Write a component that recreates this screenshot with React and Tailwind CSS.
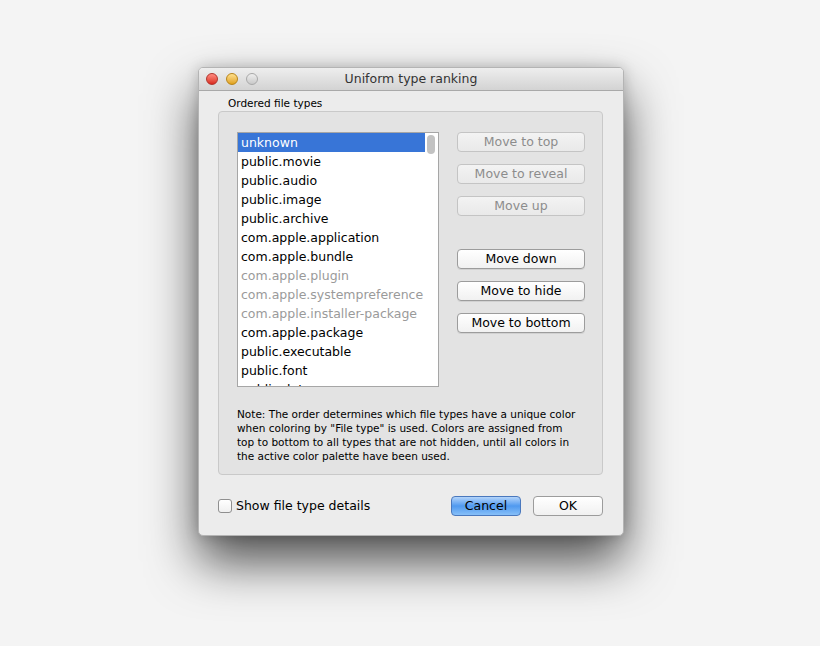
import React from 'react';

const types = [
  { name: 'unknown', selected: true },
  { name: 'public.movie' },
  { name: 'public.audio' },
  { name: 'public.image' },
  { name: 'public.archive' },
  { name: 'com.apple.application' },
  { name: 'com.apple.bundle' },
  { name: 'com.apple.plugin', hidden: true },
  { name: 'com.apple.systempreference', hidden: true },
  { name: 'com.apple.installer-package', hidden: true },
  { name: 'com.apple.package' },
  { name: 'public.executable' },
  { name: 'public.font' },
  { name: 'public.data' },
];

function MacButton({ label, disabled }) {
  return (
    <button
      disabled={disabled}
      className={`w-[128px] h-[20px] rounded-[4px] border text-[12.5px] leading-none flex items-center justify-center ${
        disabled
          ? 'border-[#c4c4c4] bg-gradient-to-b from-[#f3f3f3] to-[#e9e9e9] text-[#8c8c8c]'
          : 'border-[#9c9c9c] bg-gradient-to-b from-white to-[#f1f1f1] text-black shadow-[0_1px_0_rgba(0,0,0,0.08)]'
      }`}
    >
      {label}
    </button>
  );
}

function Light({ from, to, border }) {
  return <div className={`w-[12px] h-[12px] rounded-full border ${border} bg-gradient-to-b ${from} ${to}`} />;
}

export default function App() {
  return (
    <div className="w-[820px] h-[646px] bg-[#f4f4f4] pt-[67px] pl-[198px] font-['DejaVu_Sans',sans-serif]">
      <div className="w-[426px] h-[469px] rounded-[5px] bg-[#ececec] border border-[#b4b4b4] shadow-[0_26px_50px_rgba(0,0,0,0.68),0_0_14px_rgba(0,0,0,0.18)] overflow-hidden flex flex-col">
        {/* title bar */}
        <div className="relative h-[23px] shrink-0 bg-gradient-to-b from-[#eeeeee] to-[#d3d3d3] border-b border-[#a9a9a9] flex items-center">
          <div className="flex items-center gap-[8px] pl-[7px]">
            <Light from="from-[#ff8a80]" to="to-[#d9261c]" border="border-[#b1332b]" />
            <Light from="from-[#ffe08a]" to="to-[#e0a215]" border="border-[#b88418]" />
            <Light from="from-[#eeeeee]" to="to-[#c9c9c9]" border="border-[#a8a8a8]" />
          </div>
          <div className="absolute inset-0 flex items-center justify-center text-[12.5px] text-[#333] pt-[1px]">
            Uniform type ranking
          </div>
        </div>

        {/* body */}
        <div className="flex-1 pl-[19px] pr-[20px]">
          <div className="pt-[6px] pl-[10px] h-[20px] text-[10.5px] leading-[13px] text-black">Ordered file types</div>
          <div className="w-[385px] h-[364px] rounded-[4px] border border-[#c9c9c9] bg-[#e3e3e3] pl-[18px] pt-[20px]">
            <div className="flex">
              <div className="relative w-[202px] h-[255px] border border-[#a6a6a6] bg-white overflow-hidden">
                {types.map((t) => (
                  <div
                    key={t.name}
                    className={`h-[19px] pl-[3px] text-[12.5px] leading-[19px] whitespace-nowrap ${
                      t.selected ? 'bg-[#3875d7] text-white w-[187px]' : t.hidden ? 'text-[#9a9a9a]' : 'text-black'
                    }`}
                  >
                    {t.name}
                  </div>
                ))}
                <div className="absolute left-[189px] top-[2px] w-[8px] h-[19px] rounded-full bg-[#c2c2c2]" />
              </div>
              <div className="ml-[18px] flex flex-col">
                <MacButton label="Move to top" disabled />
                <div className="h-[12px]" />
                <MacButton label="Move to reveal" disabled />
                <div className="h-[12px]" />
                <MacButton label="Move up" disabled />
                <div className="h-[33px]" />
                <MacButton label="Move down" />
                <div className="h-[12px]" />
                <MacButton label="Move to hide" />
                <div className="h-[12px]" />
                <MacButton label="Move to bottom" />
              </div>
            </div>
            <p className="mt-[20px] text-[10.5px] leading-[14px] text-black">
              Note: The order determines which file types have a unique color
              <br />
              when coloring by "File type" is used. Colors are assigned from
              <br />
              top to bottom to all types that are not hidden, until all colors in
              <br />
              the active color palette have been used.
            </p>
          </div>

          {/* bottom row */}
          <div className="mt-[21px] flex items-center">
            <div className="w-[14px] h-[14px] rounded-[3px] border border-[#8f8f8f] bg-gradient-to-b from-white to-[#f0f0f0]" />
            <span className="ml-[4px] text-[12.5px] text-black">Show file type details</span>
            <div className="ml-auto flex gap-[12px]">
              <button className="w-[70px] h-[20px] rounded-[4px] border border-[#4a78bd] bg-gradient-to-b from-[#b3d4fa] via-[#4f99ef] to-[#86bff8] text-[12.5px] leading-none text-black">
                Cancel
              </button>
              <button className="w-[70px] h-[20px] rounded-[4px] border border-[#9c9c9c] bg-gradient-to-b from-white to-[#f1f1f1] text-[12.5px] leading-none text-black">
                OK
              </button>
            </div>
          </div>
        </div>
      </div>
    </div>
  );
}
